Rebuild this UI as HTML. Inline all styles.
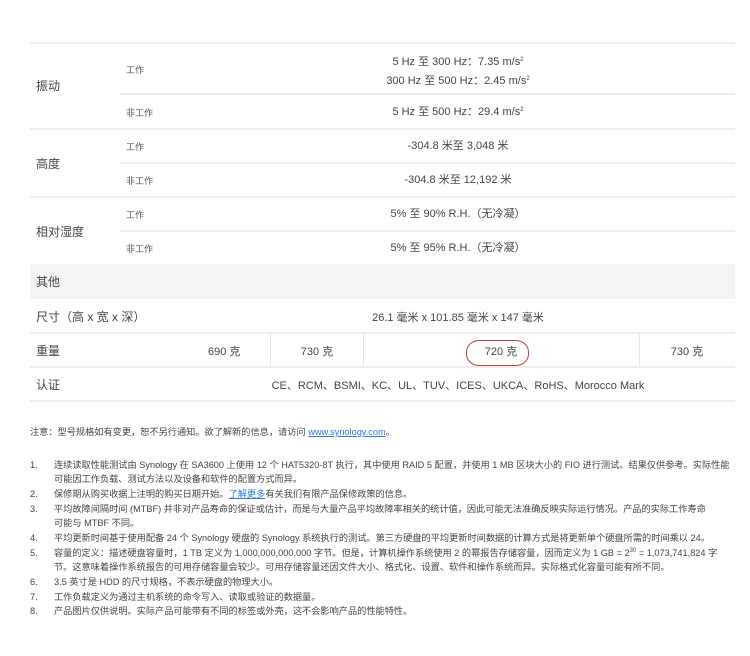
<!DOCTYPE html>
<html><head><meta charset="utf-8"><style>
*{margin:0;padding:0;box-sizing:border-box}
body{width:750px;height:656px;background:#fff;position:relative;font-family:"Liberation Sans","Noto Sans CJK SC",sans-serif;color:#555;overflow:hidden}
.a{position:absolute;white-space:nowrap;line-height:13px}
.h{position:absolute;height:2px;background:#eee}
.v{position:absolute;width:1px;background:#e6e6e6}
.lab{font-size:12px;color:#444}
.sub{font-size:9px;color:#555}
.val{font-size:11px;color:#444;text-align:center;width:556px;left:180px}
.n{font-size:9.2px;color:#444;line-height:12px}
sup{font-size:6px;vertical-align:4px;line-height:0}
a{color:#2a7ae2;text-decoration:underline}
</style></head><body>
<div class="h" style="left:30px;top:42px;width:705px"></div>
<div class="a lab" style="left:36px;top:80px">振动</div>
<div class="a sub" style="left:126px;top:64px">工作</div>
<div class="a val" style="top:56px">5 Hz 至 300 Hz：7.35 m/s<sup>2</sup></div>
<div class="a val" style="top:75px">300 Hz 至 500 Hz：2.45 m/s<sup>2</sup></div>
<div class="h" style="left:120px;top:93px;width:615px"></div>
<div class="a sub" style="left:126px;top:107px">非工作</div>
<div class="a val" style="top:106px">5 Hz 至 500 Hz：29.4 m/s<sup>2</sup></div>
<div class="h" style="left:30px;top:128px;width:705px"></div>
<div class="a lab" style="left:36px;top:158px">高度</div>
<div class="a sub" style="left:126px;top:141px">工作</div>
<div class="a val" style="top:140px">-304.8 米至 3,048 米</div>
<div class="h" style="left:120px;top:162px;width:615px"></div>
<div class="a sub" style="left:126px;top:175px">非工作</div>
<div class="a val" style="top:174px">-304.8 米至 12,192 米</div>
<div class="h" style="left:30px;top:196px;width:705px"></div>
<div class="a lab" style="left:36px;top:226px">相对湿度</div>
<div class="a sub" style="left:126px;top:209px">工作</div>
<div class="a val" style="top:208px">5% 至 90% R.H.（无冷凝）</div>
<div class="h" style="left:120px;top:230px;width:615px"></div>
<div class="a sub" style="left:126px;top:243px">非工作</div>
<div class="a val" style="top:242px">5% 至 95% R.H.（无冷凝）</div>
<div class="a" style="left:30px;top:264px;width:705px;height:35px;background:#f4f4f4"></div>
<div class="a lab" style="left:36px;top:276px">其他</div>
<div class="a lab" style="left:36px;top:311px">尺寸（高 x 宽 x 深）</div>
<div class="a val" style="top:312px">26.1 毫米 x 101.85 毫米 x 147 毫米</div>
<div class="h" style="left:30px;top:332px;width:705px"></div>
<div class="a lab" style="left:36px;top:345px">重量</div>
<div class="v" style="left:270px;top:334px;height:33px"></div>
<div class="v" style="left:363px;top:334px;height:33px"></div>
<div class="v" style="left:639px;top:334px;height:33px"></div>
<div class="a" style="left:208px;top:346px;font-size:11px;color:#444">690 克</div>
<div class="a" style="left:271px;width:92px;text-align:center;top:346px;font-size:11px;color:#444">730 克</div>
<div class="a" style="left:363px;width:276px;text-align:center;top:346px;font-size:11px;color:#444">720 克</div>
<div class="a" style="left:639px;width:96px;text-align:center;top:346px;font-size:11px;color:#444">730 克</div>
<div class="a" style="left:466px;top:340px;width:63px;height:26px;border:1px solid #c0413c;border-radius:13px/12px"></div>
<div class="h" style="left:30px;top:366px;width:705px"></div>
<div class="a lab" style="left:36px;top:379px">认证</div>
<div class="a val" style="top:380px">CE、RCM、BSMI、KC、UL、TUV、ICES、UKCA、RoHS、Morocco Mark</div>
<div class="h" style="left:30px;top:400px;width:705px"></div>
<div class="a n" style="left:30px;top:426px">注意：型号规格如有变更，恕不另行通知。欲了解新的信息，请访问 <a>www.synology.com</a>。</div>
<div class="a n" style="left:30px;top:459px">1.</div>
<div class="a n" style="left:54px;top:459px">连续读取性能测试由 Synology 在 SA3600 上使用 12 个 HAT5320-8T 执行，其中使用 RAID 5 配置，并使用 1 MB 区块大小的 FIO 进行测试。结果仅供参考。实际性能</div>
<div class="a n" style="left:54px;top:473px">可能因工作负载、测试方法以及设备和软件的配置方式而异。</div>
<div class="a n" style="left:30px;top:488px">2.</div>
<div class="a n" style="left:54px;top:488px">保修期从购买收据上注明的购买日期开始。<a>了解更多</a>有关我们有限产品保修政策的信息。</div>
<div class="a n" style="left:30px;top:503px">3.</div>
<div class="a n" style="left:54px;top:503px">平均故障间隔时间 (MTBF) 并非对产品寿命的保证或估计，而是与大量产品平均故障率相关的统计值，因此可能无法准确反映实际运行情况。产品的实际工作寿命</div>
<div class="a n" style="left:54px;top:517px">可能与 MTBF 不同。</div>
<div class="a n" style="left:30px;top:532px">4.</div>
<div class="a n" style="left:54px;top:532px">平均更新时间基于使用配备 24 个 Synology 硬盘的 Synology 系统执行的测试。第三方硬盘的平均更新时间数据的计算方式是将更新单个硬盘所需的时间乘以 24。</div>
<div class="a n" style="left:30px;top:547px">5.</div>
<div class="a n" style="left:54px;top:547px">容量的定义：描述硬盘容量时，1 TB 定义为 1,000,000,000,000 字节。但是，计算机操作系统使用 2 的幂报告存储容量，因而定义为 1 GB = 2<sup>30</sup> = 1,073,741,824 字</div>
<div class="a n" style="left:54px;top:561px">节。这意味着操作系统报告的可用存储容量会较少。可用存储容量还因文件大小、格式化、设置、软件和操作系统而异。实际格式化容量可能有所不同。</div>
<div class="a n" style="left:30px;top:576px">6.</div>
<div class="a n" style="left:54px;top:576px">3.5 英寸是 HDD 的尺寸规格，不表示硬盘的物理大小。</div>
<div class="a n" style="left:30px;top:591px">7.</div>
<div class="a n" style="left:54px;top:591px">工作负载定义为通过主机系统的命令写入、读取或验证的数据量。</div>
<div class="a n" style="left:30px;top:605px">8.</div>
<div class="a n" style="left:54px;top:605px">产品图片仅供说明。实际产品可能带有不同的标签或外壳，这不会影响产品的性能特性。</div>
</body></html>
